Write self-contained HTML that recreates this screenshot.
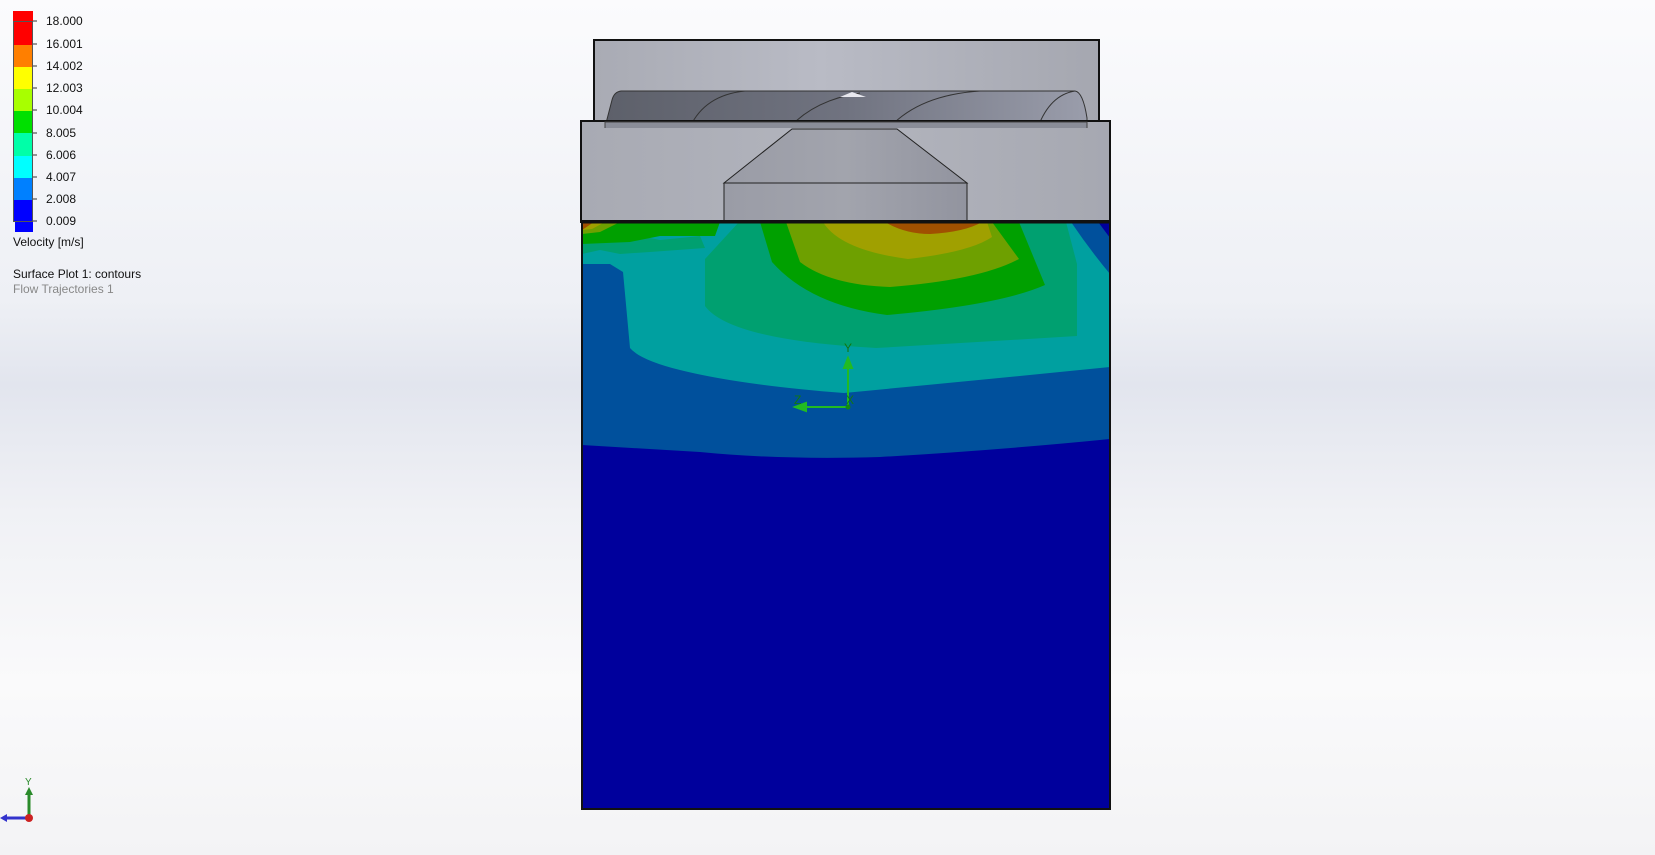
<!DOCTYPE html>
<html><head><style>
html,body{margin:0;padding:0;}
body{width:1655px;height:855px;overflow:hidden;position:relative;
background:linear-gradient(180deg,#fbfbfd 0%,#eef0f5 35%,#e2e5ee 45%,#f0f1f5 60%,#fafafb 80%,#f3f3f5 100%);
font-family:"Liberation Sans",sans-serif;}
.lbl{position:absolute;left:46px;font-size:12px;color:#111;line-height:14px;}
</style></head><body>
<svg width="1655" height="855" style="position:absolute;left:0;top:0">
<g stroke="none">
<rect x="13" y="11" width="20" height="11" fill="#ff0000"/>
<rect x="13" y="21" width="20" height="24" fill="#ff0000"/>
<rect x="13" y="45" width="20" height="22" fill="#ff7f00"/>
<rect x="13" y="67" width="20" height="22" fill="#ffff00"/>
<rect x="13" y="89" width="20" height="22" fill="#a8ff00"/>
<rect x="13" y="111" width="20" height="22" fill="#00e000"/>
<rect x="13" y="133" width="20" height="23" fill="#00ffa8"/>
<rect x="13" y="156" width="20" height="22" fill="#00ffff"/>
<rect x="13" y="178" width="20" height="22" fill="#0080ff"/>
<rect x="13" y="200" width="20" height="22" fill="#0000ff"/>
<rect x="15" y="222" width="18" height="10" fill="#0000ff"/>
</g>
<rect x="13.5" y="21.5" width="19" height="200" fill="none" stroke="#555" stroke-width="1"/>
<g stroke="#333"><line x1="33" y1="21" x2="37" y2="21"/><line x1="33" y1="44" x2="37" y2="44"/><line x1="33" y1="66" x2="37" y2="66"/><line x1="33" y1="88" x2="37" y2="88"/><line x1="33" y1="110" x2="37" y2="110"/><line x1="33" y1="133" x2="37" y2="133"/><line x1="33" y1="155" x2="37" y2="155"/><line x1="33" y1="177" x2="37" y2="177"/><line x1="33" y1="199" x2="37" y2="199"/><line x1="33" y1="221" x2="37" y2="221"/></g>
<defs>
<linearGradient id="g1" x1="0" x2="1"><stop offset="0" stop-color="#a9abb4"/><stop offset="0.45" stop-color="#b9bbc5"/><stop offset="1" stop-color="#a5a7b0"/></linearGradient>
<linearGradient id="g2" x1="0" x2="1"><stop offset="0" stop-color="#5d606a"/><stop offset="0.5" stop-color="#707380"/><stop offset="1" stop-color="#9a9dab"/></linearGradient>
<linearGradient id="g3" x1="0" x2="1"><stop offset="0" stop-color="#a8aab3"/><stop offset="0.5" stop-color="#b3b5be"/><stop offset="1" stop-color="#a6a8b1"/></linearGradient>
<linearGradient id="g4" x1="0" x2="1"><stop offset="0" stop-color="#9a9ca6"/><stop offset="0.5" stop-color="#a2a4ad"/><stop offset="1" stop-color="#92949f"/></linearGradient>
</defs>
<rect x="594" y="40" width="505" height="82" fill="url(#g1)" stroke="#111" stroke-width="2"/>
<path d="M605,127 L612,100 Q614,92 621,91 L1075,91 Q1083,92 1087,118 L1087,127 Z" fill="url(#g2)" stroke="#333" stroke-width="1"/>
<path d="M690,127 Q705,95 745,91" fill="none" stroke="#333"/>
<path d="M790,127 Q815,100 860,93" fill="none" stroke="#333"/>
<path d="M890,127 Q920,95 980,91" fill="none" stroke="#333"/>
<path d="M1038,127 Q1050,95 1075,91" fill="none" stroke="#333"/>
<path d="M840,97 L852,92 L866,97 Z" fill="#e8e8ee"/>
<rect x="581" y="121" width="529" height="101" fill="url(#g3)" stroke="#111" stroke-width="2"/>
<path d="M605,128 L605,122 L1087,122 L1087,128" fill="#8a8d98" stroke="#444" stroke-width="1"/>
<path d="M792,129 L897,129 L967,183 L724,183 Z" fill="url(#g4)" stroke="#222" stroke-width="1"/>
<rect x="724" y="183" width="243" height="39" fill="url(#g4)" stroke="#222" stroke-width="1"/>
<rect x="582" y="222" width="528" height="587" fill="#00009c"/>
<path d="M582,222 L1110,222 L1110,439 Q1000,450 880,457 Q780,460 700,452 L582,445 Z" fill="#00509c"/>
<path d="M582,222 L1110,222 L1110,367 Q980,380 844,393 Q740,385 680,370 Q640,360 630,348 L623,272 L610,264 L582,264 Z" fill="#00a0a0"/>
<path d="M582,236 L640,236 L660,240 L700,236 L705,248 L650,252 L620,254 L600,250 L582,254 Z" fill="#00a070"/>
<path d="M739,222 L705,259 L705,306 Q730,340 876,348 Q980,342 1077,336 L1077,264 L1066,222 Z" fill="#00a070"/>
<path d="M582,222 L720,222 L715,236 L660,236 L630,242 L582,244 Z" fill="#00a000"/>
<path d="M760,222 L772,262 Q810,305 887,315 Q1000,305 1045,285 L1019,222 Z" fill="#00a000"/>
<path d="M582,222 L620,222 L600,232 L582,234 Z" fill="#6ea000"/>
<path d="M786,222 L800,262 Q830,285 890,287 Q980,280 1019,259 L992,222 Z" fill="#6ea000"/>
<path d="M582,222 L605,222 L592,229 L582,230 Z" fill="#a0a000"/>
<path d="M823,222 Q840,250 908,259 Q970,252 992,237 L987,222 Z" fill="#a0a000"/>
<path d="M885,222 Q905,234 930,234 Q965,232 982,222 Z M582,222 L594,222 L582,230 Z" fill="#a05000"/>
<path d="M1071,222 L1098,222 L1110,238 L1110,274 Q1090,250 1071,222 Z" fill="#00509c"/>
<path d="M1098,222 L1110,222 L1110,238 Z" fill="#00009c"/>
<rect x="582" y="221" width="528" height="588" fill="none" stroke="#111" stroke-width="2"/>
<line x1="581" y1="222" x2="1110" y2="222" stroke="#111" stroke-width="3"/>
<g stroke="#22bb22" stroke-width="2" fill="#22bb22">
<line x1="848" y1="407" x2="848" y2="365"/><path d="M844,368 L848,358 L852,368 Z"/>
<line x1="848" y1="407" x2="803" y2="407"/><path d="M806,403 L795,407 L806,411 Z"/>
</g>
<circle cx="848" cy="407" r="2.5" fill="#118811"/>
<text x="844" y="352" font-size="12" fill="#117711" font-family="Liberation Sans">Y</text>
<text x="794" y="404" font-size="12" fill="#117711" font-family="Liberation Sans">Z</text>
<text x="846" y="404" font-size="12" fill="#117711" font-family="Liberation Sans">X</text>
<line x1="29" y1="818" x2="29" y2="793" stroke="#2a8a2a" stroke-width="3"/>
<path d="M25,795 L29,787 L33,795 Z" fill="#2a8a2a"/>
<line x1="29" y1="818" x2="6" y2="818" stroke="#3333cc" stroke-width="3"/>
<path d="M7,814 L0,818 L7,822 Z" fill="#3333cc"/>
<circle cx="29" cy="818" r="4" fill="#cc2222"/>
<text x="25" y="785" font-size="10" fill="#2a8a2a" font-family="Liberation Sans">Y</text>
</svg>
<div class="lbl" style="top:14px">18.000</div>
<div class="lbl" style="top:37px">16.001</div>
<div class="lbl" style="top:59px">14.002</div>
<div class="lbl" style="top:81px">12.003</div>
<div class="lbl" style="top:103px">10.004</div>
<div class="lbl" style="top:126px">8.005</div>
<div class="lbl" style="top:148px">6.006</div>
<div class="lbl" style="top:170px">4.007</div>
<div class="lbl" style="top:192px">2.008</div>
<div class="lbl" style="top:214px">0.009</div>
<div class="lbl" style="left:13px;top:235px">Velocity [m/s]</div>
<div class="lbl" style="left:13px;top:267px">Surface Plot 1: contours</div>
<div class="lbl" style="left:13px;top:282px;color:#888">Flow Trajectories 1</div>
</body></html>
